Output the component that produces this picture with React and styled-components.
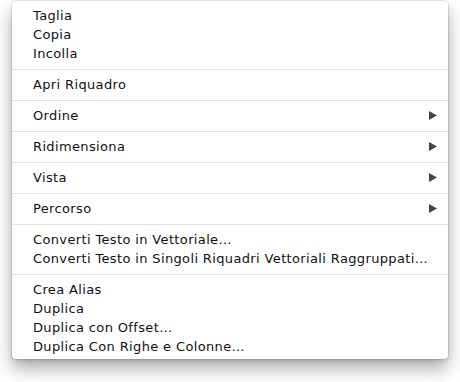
import React from "react";
import styled, { createGlobalStyle } from "styled-components";

const Global = createGlobalStyle`
  html, body { margin: 0; padding: 0; background: #ffffff; }
  body { width: 460px; height: 382px; overflow: hidden; }
`;

const Page = styled.div`
  padding: 1px 0 0 12px;
`;

const Menu = styled.div`
  width: 436px;
  background: #ffffff;
  border-radius: 4px;
  box-shadow: 0 0 0 1px rgba(0, 0, 0, 0.08), 0 10px 18px rgba(0, 0, 0, 0.32),
    0 2px 4px rgba(0, 0, 0, 0.12);
  font-family: "DejaVu Sans", "Liberation Sans", sans-serif;
  font-size: 13px;
  letter-spacing: 0.36px;
  color: #111111;
  display: flex;
  flex-direction: column;
`;

const Group = styled.div`
  display: flex;
  flex-direction: column;
  padding: ${(p) => p.$top ?? 5}px 0 ${(p) => p.$bottom ?? 6}px;
  & + & {
    border-top: 1px solid #e1e1e1;
  }
`;

const Item = styled.div`
  height: 19px;
  line-height: 19px;
  padding: 0 11px 0 21px;
  display: flex;
  align-items: center;
  justify-content: space-between;
  white-space: nowrap;
`;

const Arrow = styled.svg`
  width: 8px;
  height: 9px;
  flex: none;
`;

const SubArrow = () => (
  <Arrow viewBox="0 0 8 9">
    <path d="M0 0 L8 4.5 L0 9 Z" fill="#444444" />
  </Arrow>
);

const groups = [
  { items: ["Taglia", "Copia", "Incolla"], top: 5 },
  { items: ["Apri Riquadro"] },
  { items: ["Ordine"], sub: true },
  { items: ["Ridimensiona"], sub: true },
  { items: ["Vista"], sub: true },
  { items: ["Percorso"], sub: true },
  {
    items: [
      "Converti Testo in Vettoriale…",
      "Converti Testo in Singoli Riquadri Vettoriali Raggruppati…",
    ],
  },
  {
    items: ["Crea Alias", "Duplica", "Duplica con Offset…", "Duplica Con Righe e Colonne…"],
    bottom: 3,
  },
];

export default function App() {
  return (
    <>
      <Global />
      <Page>
        <Menu>
          {groups.map((g, i) => (
            <Group key={i} $top={g.top} $bottom={g.bottom}>
              {g.items.map((t) => (
                <Item key={t}>
                  <span>{t}</span>
                  {g.sub && <SubArrow />}
                </Item>
              ))}
            </Group>
          ))}
        </Menu>
      </Page>
    </>
  );
}
